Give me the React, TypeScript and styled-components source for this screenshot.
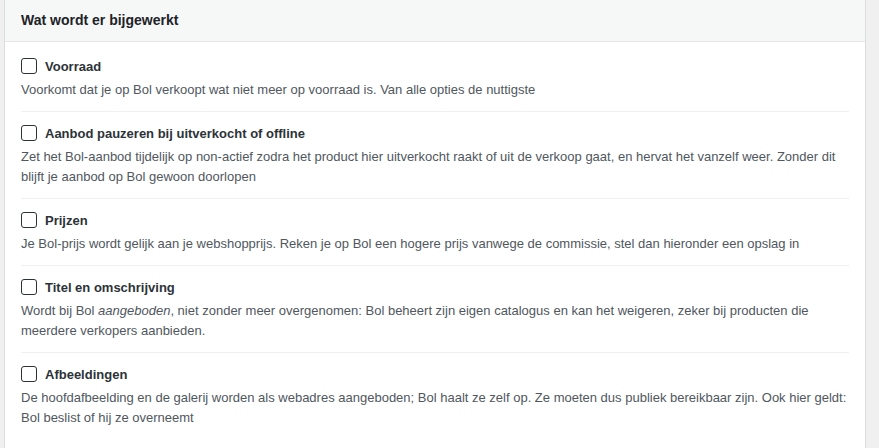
import React from 'react';
import styled, { createGlobalStyle } from 'styled-components';

const GlobalStyle = createGlobalStyle`
    html, body {
        margin: 0;
        padding: 0;
        background: #f0f0f1;
        overflow: hidden;
    }
    body {
        font-family: "Segoe UI", "Liberation Sans", Arial, sans-serif;
        font-size: 13px;
        color: #3c434a;
    }
`;

interface Option {
    id: string;
    label: string;
    description: React.ReactNode;
}

const options: Option[] = [
    {
        id: 'stock',
        label: 'Voorraad',
        description: 'Voorkomt dat je op Bol verkoopt wat niet meer op voorraad is. Van alle opties de nuttigste',
    },
    {
        id: 'pause',
        label: 'Aanbod pauzeren bij uitverkocht of offline',
        description:
            'Zet het Bol-aanbod tijdelijk op non-actief zodra het product hier uitverkocht raakt of uit de verkoop gaat, en hervat het vanzelf weer. Zonder dit blijft je aanbod op Bol gewoon doorlopen',
    },
    {
        id: 'prices',
        label: 'Prijzen',
        description:
            'Je Bol-prijs wordt gelijk aan je webshopprijs. Reken je op Bol een hogere prijs vanwege de commissie, stel dan hieronder een opslag in',
    },
    {
        id: 'content',
        label: 'Titel en omschrijving',
        description: (
            <>
                Wordt bij Bol <em>aangeboden</em>, niet zonder meer overgenomen: Bol beheert zijn eigen catalogus en
                kan het weigeren, zeker bij producten die meerdere verkopers aanbieden.
            </>
        ),
    },
    {
        id: 'images',
        label: 'Afbeeldingen',
        description:
            'De hoofdafbeelding en de galerij worden als webadres aangeboden; Bol haalt ze zelf op. Ze moeten dus publiek bereikbaar zijn. Ook hier geldt: Bol beslist of hij ze overneemt',
    },
];

const Page = styled.div`
    padding-left: 4px;
    width: 862px;
`;

// the panel runs on below the fold, so no bottom border shows
const Panel = styled.section`
    background: #fff;
    border: 1px solid #dcdcde;
    border-top: none;
    min-height: 480px;
    box-sizing: border-box;
`;

const PanelHeader = styled.h2`
    margin: 0;
    height: 42px;
    box-sizing: border-box;
    padding: 0 16px 1px;
    display: flex;
    align-items: center;
    background: #f6f7f7;
    border-bottom: 1px solid #e8e8e9;
    font-size: 14px;
    font-weight: 600;
    color: #1d2327;
`;

const OptionList = styled.div`
    padding: 3px 16px 0;
`;

const OptionItem = styled.div`
    padding: 13px 0 11px;
    border-bottom: 1px solid #f0f0f1;

    &:last-child {
        border-bottom: none;
    }
`;

const OptionLabel = styled.label`
    display: flex;
    align-items: center;
    gap: 8px;
    height: 16px;
    font-weight: 600;
    color: #2c3338;
    cursor: pointer;
`;

const Checkbox = styled.input.attrs({ type: 'checkbox' })`
    appearance: none;
    margin: 0;
    width: 16px;
    height: 16px;
    box-sizing: border-box;
    border: 1.5px solid #2c3338;
    border-radius: 3px;
    background: #fff;
    flex: none;
`;

const Description = styled.p`
    margin: 6px 0 0;
    line-height: 20px;
    color: #50575e;
`;

export default function App() {
    return (
        <>
            <GlobalStyle />
            <Page>
                <Panel>
                    <PanelHeader>Wat wordt er bijgewerkt</PanelHeader>
                    <OptionList>
                        {options.map((option) => (
                            <OptionItem key={option.id}>
                                <OptionLabel>
                                    <Checkbox name={option.id} />
                                    {option.label}
                                </OptionLabel>
                                <Description>{option.description}</Description>
                            </OptionItem>
                        ))}
                    </OptionList>
                </Panel>
            </Page>
        </>
    );
}
